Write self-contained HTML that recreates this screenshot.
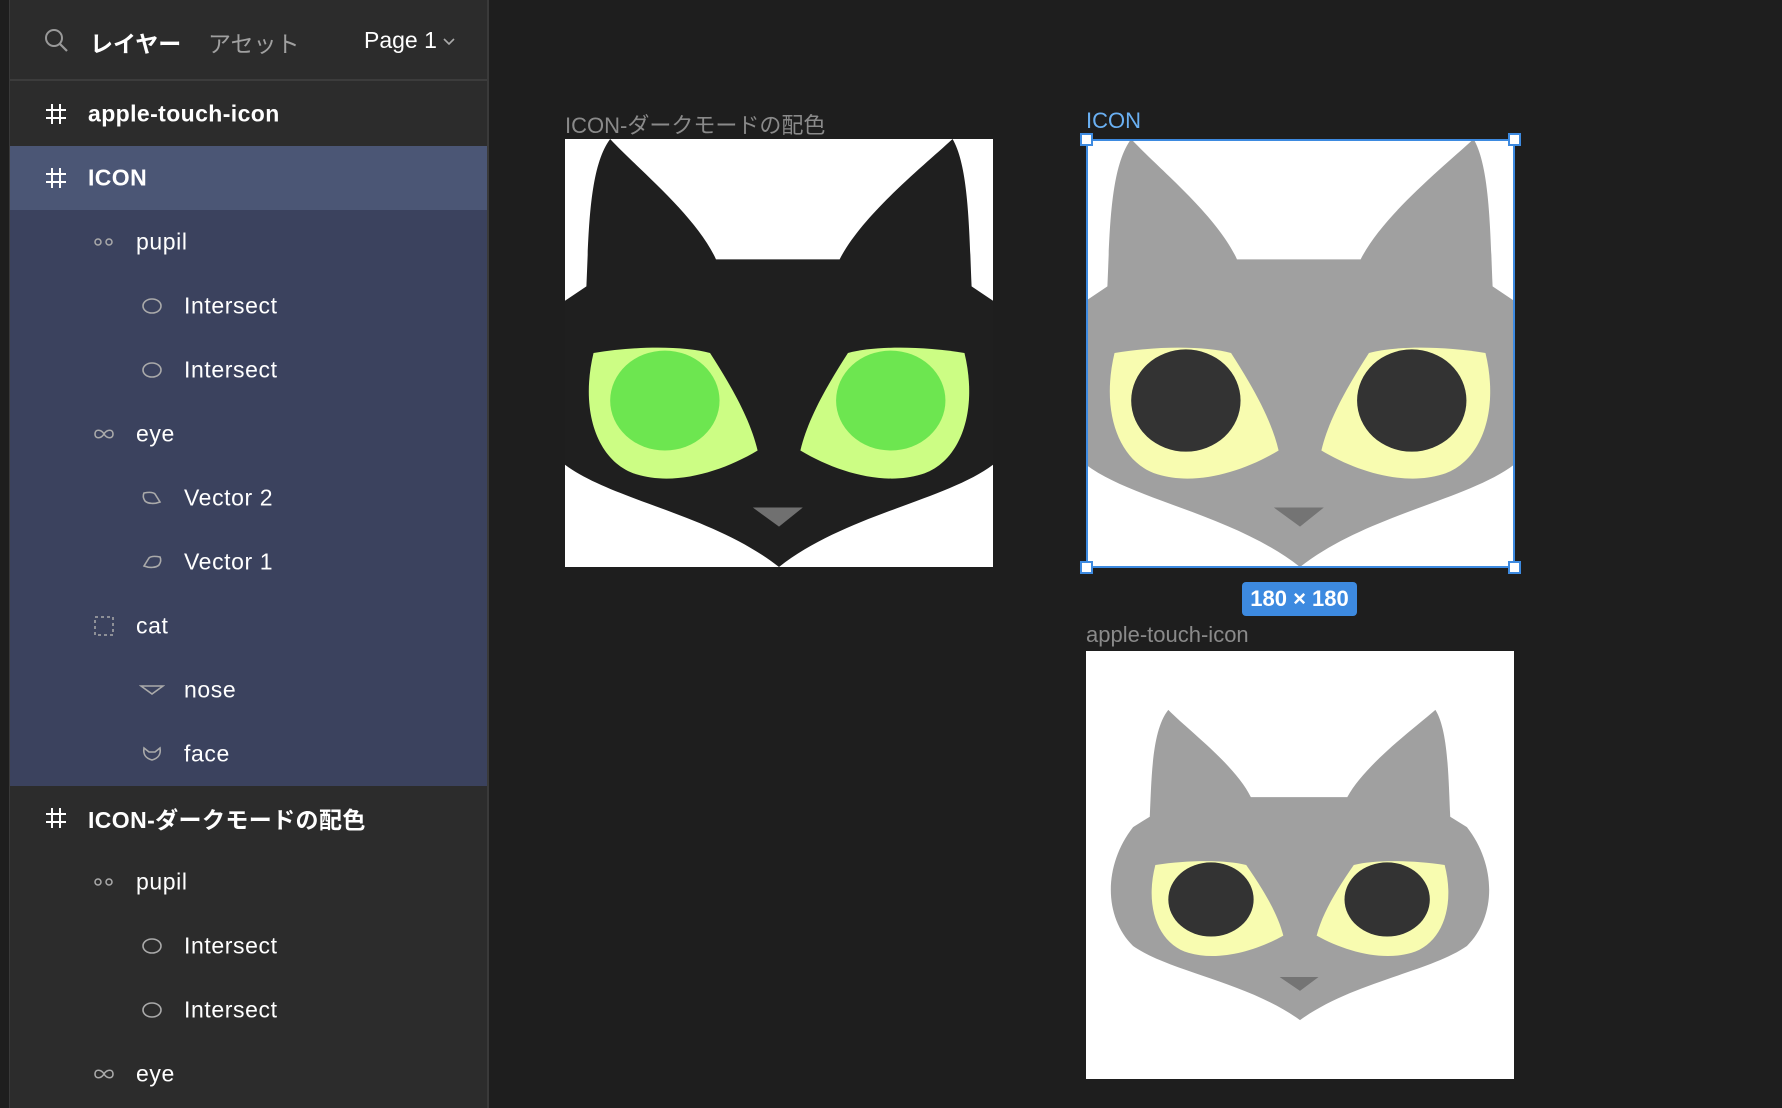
<!DOCTYPE html>
<html><head><meta charset="utf-8"><style>
*{margin:0;padding:0;box-sizing:border-box}
body{width:1782px;height:1108px;background:#1e1e1e;position:relative;overflow:hidden;font-family:"Liberation Sans","Noto Sans CJK JP",sans-serif;color:#fff}
#side{position:absolute;left:9px;top:0;width:480px;height:1108px;background:#2c2c2c;border-right:2px solid #3a3a3a;border-left:1px solid #3a3a3a}
#hdr{height:81px;border-bottom:2px solid #3c3c3c;position:relative}
.row{position:absolute;left:0;width:477px;height:64px}
.row .t{position:absolute;top:50%;transform:translateY(-50%);font-size:23px;letter-spacing:0.6px;white-space:nowrap}
.row .t.b{font-weight:bold;letter-spacing:0.4px}
.row svg{position:absolute;top:50%;transform:translateY(-50%)}
.lbl{position:absolute;font-size:22px;color:#8a8a8a;white-space:nowrap}
.fr{position:absolute;width:428px;height:428px;background:#fff;overflow:hidden}
</style></head><body>
<div id="side">
 <div id="hdr">
  <svg style="position:absolute;left:34px;top:28px" width="26" height="26" viewBox="0 0 26 26"><circle cx="10" cy="10" r="8" fill="none" stroke="#999" stroke-width="2"/><path d="M16 16L23 23" stroke="#999" stroke-width="2.2"/></svg>
  <div style="position:absolute;left:80px;top:25px;font-size:23px;font-weight:bold">レイヤー</div>
  <div style="position:absolute;left:198px;top:25px;font-size:23px;color:#a0a0a0">アセット</div>
  <div style="position:absolute;left:354px;top:27px;font-size:23px">Page 1</div>
  <svg style="position:absolute;left:432px;top:37px" width="14" height="10" viewBox="0 0 14 10"><path d="M2 2L7 7L12 2" fill="none" stroke="#aaa" stroke-width="1.6"/></svg>
 </div>
 <div style="position:absolute;left:0;top:146px;width:477px;height:64px;background:#4b5675"></div>
 <div style="position:absolute;left:0;top:210px;width:477px;height:576px;background:#3b425e"></div>
 <div class="row" style="top:82px"><svg style="left:34px" width="24" height="24" viewBox="0 0 24 24"><path d="M8 2V22M16 2V22M2 8H22M2 16H22" stroke="#fff" stroke-width="2"/></svg><div class="t b" style="left:78px">apple-touch-icon</div></div>
 <div class="row" style="top:146px"><svg style="left:34px" width="24" height="24" viewBox="0 0 24 24"><path d="M8 2V22M16 2V22M2 8H22M2 16H22" stroke="#fff" stroke-width="2"/></svg><div class="t b" style="left:78px">ICON</div></div>
 <div class="row" style="top:210px"><svg style="left:83px" width="22" height="12" viewBox="0 0 22 12"><circle cx="5" cy="6" r="3" fill="none" stroke="#aaa" stroke-width="1.5"/><circle cx="16" cy="6" r="3" fill="none" stroke="#aaa" stroke-width="1.5"/></svg><div class="t" style="left:126px">pupil</div></div>
 <div class="row" style="top:274px"><svg style="left:131px" width="22" height="18" viewBox="0 0 22 18"><ellipse cx="11" cy="9" rx="9" ry="7" fill="none" stroke="#aaa" stroke-width="1.6"/></svg><div class="t" style="left:174px">Intersect</div></div>
 <div class="row" style="top:338px"><svg style="left:131px" width="22" height="18" viewBox="0 0 22 18"><ellipse cx="11" cy="9" rx="9" ry="7" fill="none" stroke="#aaa" stroke-width="1.6"/></svg><div class="t" style="left:174px">Intersect</div></div>
 <div class="row" style="top:402px"><svg style="left:83px" width="22" height="12" viewBox="0 0 22 12"><path d="M11 6C8 1 2 1 2 6C2 11 8 11 11 6C14 1 20 1 20 6C20 11 14 11 11 6Z" fill="none" stroke="#aaa" stroke-width="1.6"/></svg><div class="t" style="left:126px">eye</div></div>
 <div class="row" style="top:466px"><svg style="left:131px" width="22" height="16" viewBox="0 0 22 16"><path d="M3 3C8 2 12 2 14 4L19 12C14 14 7 14 4 11C2 8 2 5 3 3Z" fill="none" stroke="#aaa" stroke-width="1.6"/></svg><div class="t" style="left:174px">Vector 2</div></div>
 <div class="row" style="top:530px"><svg style="left:131px" width="22" height="16" viewBox="0 0 22 16"><path d="M19 3C14 2 10 2 8 4L3 12C8 14 15 14 18 11C20 8 20 5 19 3Z" fill="none" stroke="#aaa" stroke-width="1.6"/></svg><div class="t" style="left:174px">Vector 1</div></div>
 <div class="row" style="top:594px"><svg style="left:83px" width="22" height="22" viewBox="0 0 22 22"><rect x="2" y="2" width="18" height="18" fill="none" stroke="#aaa" stroke-width="1.5" stroke-dasharray="3 3"/></svg><div class="t" style="left:126px">cat</div></div>
 <div class="row" style="top:658px"><svg style="left:129px" width="26" height="14" viewBox="0 0 26 14"><path d="M2 3H24L13 11Z" fill="none" stroke="#aaa" stroke-width="1.6"/></svg><div class="t" style="left:174px">nose</div></div>
 <div class="row" style="top:722px"><svg style="left:131px" width="22" height="18" viewBox="0 0 22 18"><path d="M3 3L8 7H14L19 3C20 9 18 13 11 15C4 13 2 9 3 3Z" fill="none" stroke="#aaa" stroke-width="1.6"/></svg><div class="t" style="left:174px">face</div></div>
 <div class="row" style="top:786px"><svg style="left:34px" width="24" height="24" viewBox="0 0 24 24"><path d="M8 2V22M16 2V22M2 8H22M2 16H22" stroke="#fff" stroke-width="2"/></svg><div class="t b" style="left:78px">ICON-ダークモードの配色</div></div>
 <div class="row" style="top:850px"><svg style="left:83px" width="22" height="12" viewBox="0 0 22 12"><circle cx="5" cy="6" r="3" fill="none" stroke="#aaa" stroke-width="1.5"/><circle cx="16" cy="6" r="3" fill="none" stroke="#aaa" stroke-width="1.5"/></svg><div class="t" style="left:126px">pupil</div></div>
 <div class="row" style="top:914px"><svg style="left:131px" width="22" height="18" viewBox="0 0 22 18"><ellipse cx="11" cy="9" rx="9" ry="7" fill="none" stroke="#aaa" stroke-width="1.6"/></svg><div class="t" style="left:174px">Intersect</div></div>
 <div class="row" style="top:978px"><svg style="left:131px" width="22" height="18" viewBox="0 0 22 18"><ellipse cx="11" cy="9" rx="9" ry="7" fill="none" stroke="#aaa" stroke-width="1.6"/></svg><div class="t" style="left:174px">Intersect</div></div>
 <div class="row" style="top:1042px"><svg style="left:83px" width="22" height="12" viewBox="0 0 22 12"><path d="M11 6C8 1 2 1 2 6C2 11 8 11 11 6C14 1 20 1 20 6C20 11 14 11 11 6Z" fill="none" stroke="#aaa" stroke-width="1.6"/></svg><div class="t" style="left:126px">eye</div></div>
</div>

<svg width="0" height="0" style="position:absolute"><defs>
 <path id="face" d="M19,0 C30,12 55,32 63.5,50.6 L115.5,50.6 C125,32 150,12 163,0 C170,12 170,40 171,62 L180,68 C196,90 196,120 180,137 C160,152 118,158 90,180 C62,158 20,152 0,137 C-16,120 -16,90 0,68 L9,62 C10,40 10,12 19,0 Z"/>
 <path id="scl" d="M12,90 C30,87 50,87 61,90 C70,104 78,118 81,131 C66,140 46,146 30,141 C14,136 6,115 12,90 Z"/>
 <path id="scr" d="M168,90 C150,87 130,87 119,90 C110,104 102,118 99,131 C114,140 134,146 150,141 C166,136 174,115 168,90 Z"/>
 <clipPath id="cl"><use href="#scl"/></clipPath>
 <clipPath id="cr"><use href="#scr"/></clipPath>
</defs></svg>

<div class="lbl" style="left:565px;top:108px">ICON-ダークモードの配色</div>
<div class="fr" style="left:565px;top:139px"><svg width="428" height="428" viewBox="0 0 180 180">
 <use href="#face" fill="#1f1f1f"/>
 <use href="#scl" fill="#ccfd84"/><use href="#scr" fill="#ccfd84"/>
 <ellipse cx="42" cy="110" rx="23" ry="21" fill="#6de650" clip-path="url(#cl)"/>
 <ellipse cx="137" cy="110" rx="23" ry="21" fill="#6de650" clip-path="url(#cr)"/>
 <path d="M79,155 L100,155 L90,163 Z" fill="#707070"/>
</svg></div>

<div class="lbl" style="left:1086px;top:108px;color:#6ab0f3">ICON</div>
<div class="fr" style="left:1086px;top:139px"><svg width="428" height="428" viewBox="0 0 180 180">
 <use href="#face" fill="#a0a0a0"/>
 <use href="#scl" fill="#f8fcb0"/><use href="#scr" fill="#f8fcb0"/>
 <ellipse cx="42" cy="110" rx="23" ry="21.5" fill="#333" clip-path="url(#cl)"/>
 <ellipse cx="137" cy="110" rx="23" ry="21.5" fill="#333" clip-path="url(#cr)"/>
 <path d="M79,155 L100,155 L90,163 Z" fill="#747474"/>
</svg></div>
<div style="position:absolute;left:1086px;top:139px;width:429px;height:429px;border:2px solid #3d8ae0"></div>
<div style="position:absolute;left:1080px;top:133px;width:13px;height:13px;background:#fff;border:2px solid #3d8ae0"></div>
<div style="position:absolute;left:1508px;top:133px;width:13px;height:13px;background:#fff;border:2px solid #3d8ae0"></div>
<div style="position:absolute;left:1080px;top:561px;width:13px;height:13px;background:#fff;border:2px solid #3d8ae0"></div>
<div style="position:absolute;left:1508px;top:561px;width:13px;height:13px;background:#fff;border:2px solid #3d8ae0"></div>
<div style="position:absolute;left:1242px;top:582px;width:115px;height:34px;background:#3d8ae0;border-radius:4px;font-size:22px;font-weight:bold;line-height:34px;text-align:center;color:#fff">180 × 180</div>

<div class="lbl" style="left:1086px;top:622px">apple-touch-icon</div>
<div class="fr" style="left:1086px;top:651px"><svg width="428" height="428" viewBox="0 0 180 180"><g transform="translate(90,90) scale(0.78,0.725) translate(-90,-90)">
 <use href="#face" fill="#a0a0a0"/>
 <use href="#scl" fill="#f8fcb0"/><use href="#scr" fill="#f8fcb0"/>
 <ellipse cx="42" cy="110" rx="23" ry="21.5" fill="#333" clip-path="url(#cl)"/>
 <ellipse cx="137" cy="110" rx="23" ry="21.5" fill="#333" clip-path="url(#cr)"/>
 <path d="M79,155 L100,155 L90,163 Z" fill="#747474"/>
</g></svg></div>
</body></html>
